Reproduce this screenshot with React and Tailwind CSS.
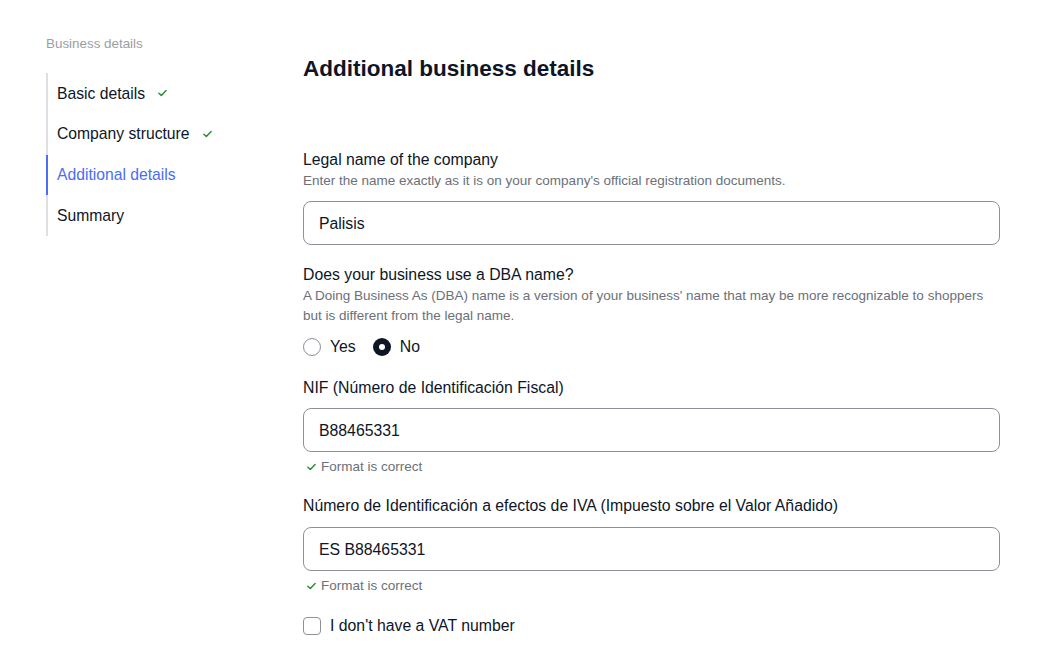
import React, { useState } from 'react';

const Check = ({ className = '' }) => (
  <svg viewBox="0 0 10 8" className={className} fill="none">
    <path d="M1 4.2 L3.7 6.8 L9 1.2" stroke="currentColor" strokeWidth="1.6" strokeLinecap="round" strokeLinejoin="round" />
  </svg>
);

const steps = [
  { label: 'Basic details', done: true },
  { label: 'Company structure', done: true },
  { label: 'Additional details', active: true },
  { label: 'Summary' },
];

const Field = ({ label, value, valid, className = '', inputGap = 'mt-[9px]' }) => (
  <div className={className}>
    <div className="pt-[1px] text-[15.8px] leading-[22px] text-[#0d1527]">{label}</div>
    <div className={`${inputGap} h-[44px] rounded-[8px] border border-[#8c919b] flex items-center pt-[1px] px-[15px] text-[15.8px] text-[#0d1527]`}>
      {value}
    </div>
    {valid && (
      <div className="mt-[5px] flex items-center gap-[5px] pl-[4px] text-[13.5px] leading-[20px] text-[#6b7079]">
        <Check className="w-[9px] h-[8px] text-[#2f8a3a]" />
        Format is correct
      </div>
    )}
  </div>
);

const Radio = ({ checked }) =>
  checked ? (
    <span className="w-[18px] h-[18px] rounded-full bg-[#0d1527] flex items-center justify-center">
      <span className="w-[6px] h-[6px] rounded-full bg-white" />
    </span>
  ) : (
    <span className="w-[18px] h-[18px] rounded-full border border-[#8c919b]" />
  );

export default function App() {
  const [dba, setDba] = useState('no');
  const [noVat, setNoVat] = useState(false);

  return (
    <div className="w-[1048px] h-[671px] bg-white flex font-['Liberation_Sans',Arial,sans-serif]">
      {/* Sidebar */}
      <aside className="w-[303px] pl-[46px] pt-[34px] shrink-0">
        <div className="text-[13.4px] leading-[20px] text-[#9a9ea6]">Business details</div>
        <ul className="mt-[19px] w-[200px] border-l-2 border-[#dcdfe4]">
          {steps.map((s) => (
            <li
              key={s.label}
              className={`-ml-[2px] h-[40.75px] flex items-center gap-[13px] pl-[9px] text-[15.7px] border-l-2 ${
                s.active ? 'border-[#4a6cf7] text-[#4a6cf7]' : 'border-transparent text-[#0d1527]'
              }`}
            >
              {s.label}
              {s.done && <Check className="w-[9px] h-[8px] text-[#2f8a3a]" />}
            </li>
          ))}
        </ul>
      </aside>

      {/* Main form */}
      <main className="w-[697px] pt-[55px]">
        <h1 className="text-[22.5px] leading-[28px] font-bold text-[#0d1527]">Additional business details</h1>

        <div className="mt-[65px]">
          <div className="pt-[1px] text-[15.8px] leading-[22px] text-[#0d1527]">Legal name of the company</div>
          <div className="text-[13.5px] leading-[20px] text-[#6b7079]">
            Enter the name exactly as it is on your company's official registration documents.
          </div>
          <div className="mt-[10px] h-[44px] rounded-[8px] border border-[#8c919b] flex items-center pt-[1px] px-[15px] text-[15.8px] text-[#0d1527]">
            Palisis
          </div>
        </div>

        <div className="mt-[18px]">
          <div className="pt-[1px] text-[15.8px] leading-[22px] text-[#0d1527]">Does your business use a DBA name?</div>
          <div className="text-[13.5px] leading-[20px] text-[#6b7079] pr-[8px]">
            A Doing Business As (DBA) name is a version of your business' name that may be more recognizable to shoppers but is different from the legal name.
          </div>
          <div className="mt-[10px] h-[22px] flex items-center text-[15.8px] text-[#0d1527]">
            <button className="flex items-center gap-[9px]" onClick={() => setDba('yes')}>
              <Radio checked={dba === 'yes'} />
              Yes
            </button>
            <button className="ml-[17px] flex items-center gap-[9px]" onClick={() => setDba('no')}>
              <Radio checked={dba === 'no'} />
              No
            </button>
          </div>
        </div>

        <Field className="mt-[18px]" label="NIF (Número de Identificación Fiscal)" value="B88465331" valid />
        <Field
          className="mt-[17px]"
          inputGap="mt-[10px]"
          label="Número de Identificación a efectos de IVA (Impuesto sobre el Valor Añadido)"
          value="ES B88465331"
          valid
        />

        <label className="mt-[19px] h-[22px] flex items-center gap-[9px] text-[15.8px] text-[#0d1527] cursor-pointer">
          <span
            onClick={() => setNoVat(!noVat)}
            className={`w-[18px] h-[18px] rounded-[4px] border flex items-center justify-center ${
              noVat ? 'bg-[#0d1527] border-[#0d1527]' : 'border-[#8c919b]'
            }`}
          >
            {noVat && <Check className="w-[10px] h-[8px] text-white" />}
          </span>
          I don't have a VAT number
        </label>
      </main>
    </div>
  );
}
